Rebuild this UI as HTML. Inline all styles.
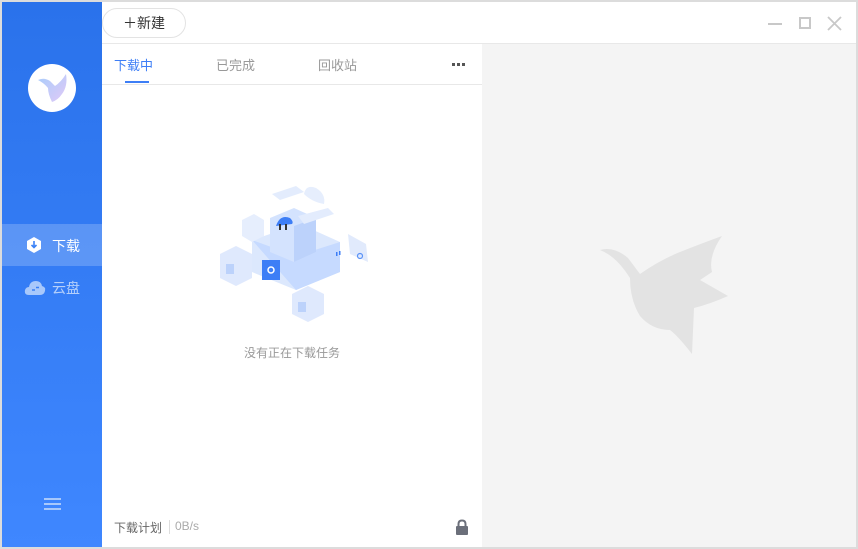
<!DOCTYPE html><html><head><meta charset="utf-8"><style>
*{margin:0;padding:0;box-sizing:border-box}
body{width:858px;height:549px;background:#dcdcdc;font-family:"Liberation Sans","Noto Sans CJK SC",sans-serif;position:relative;overflow:hidden}
.win{position:absolute;left:2px;top:2px;width:854px;height:545px;background:#fff}
.side{position:absolute;left:0;top:0;width:100px;height:545px;background:linear-gradient(#2a72eb,#3f87ff)}
.abs{position:absolute}
</style></head><body><div class="win">
<div class="side">
 <div class="abs" style="left:26px;top:62px;width:48px;height:48px;border-radius:50%;background:#fff;overflow:hidden">
  <svg width="48" height="48" viewBox="0 0 48 48"><defs><linearGradient id="g" x1="0" y1="0" x2="1" y2="1"><stop offset="0" stop-color="#a9cdfb"/><stop offset="1" stop-color="#e0c9f7"/></linearGradient></defs><path d="M10 16 Q16 13 22 17 L27 22 Q33 18 38 10 Q40 22 34 30 Q30 36 24 38 Q20 30 20 24 Q16 19 10 16Z" fill="url(#g)"/></svg>
 </div>
 <div class="abs" style="left:0;top:222px;width:100px;height:42px;background:rgba(255,255,255,.2)"></div>
 <svg class="abs" style="left:23px;top:234px" width="18" height="18" viewBox="0 0 18 18"><path d="M9 1 L16 5 V13 L9 17 L2 13 V5Z" fill="#fff"/><path d="M9 5 V11 M6.5 9 L9 11.5 L11.5 9" stroke="#3b82f6" stroke-width="1.6" fill="none"/></svg>
 <div class="abs" style="left:50px;top:234px;color:#fff;font-size:14px">下载</div>
 <svg class="abs" style="left:22px;top:278px" width="22" height="16" viewBox="0 0 22 16"><path d="M5 15 Q0 15 1 10 Q2 7 5 7 Q6 1 12 1 Q17 1 18 6 Q22 7 21 11 Q20 15 16 15Z" fill="#a8c8fb"/><path d="M8 10 H11 M12 7.5 H15" stroke="#3a80f5" stroke-width="1.5"/></svg>
 <div class="abs" style="left:50px;top:276px;color:#b5d0fb;font-size:14px">云盘</div>
 <div class="abs" style="left:42px;top:496px;width:17px;height:2px;background:#a8c8fb;box-shadow:0 5px 0 #a8c8fb,0 10px 0 #a8c8fb"></div>
</div>
<div class="abs" style="left:100px;top:6px;width:84px;height:30px;border:1px solid #e3e3e3;border-radius:15px;font-size:14px;color:#333;text-align:center;line-height:28px">＋新建</div>
<div class="abs" style="left:100px;top:41px;width:754px;height:1px;background:#e8e8e8"></div>
<div class="abs" style="left:766px;top:21px;width:14px;height:1.5px;background:#c8c8c8"></div>
<div class="abs" style="left:797px;top:15px;width:12px;height:12px;border:2px solid #c8c8c8"></div>
<svg class="abs" style="left:825px;top:14px" width="15" height="15"><path d="M1 1L14 14M14 1L1 14" stroke="#c8c8c8" stroke-width="1.8"/></svg>
<div class="abs" style="left:480px;top:42px;width:374px;height:503px;background:#f4f4f4"></div>
<svg class="abs" style="left:598px;top:232px" width="132" height="124" viewBox="0 0 132 124"><path d="M0 16 Q14 12 28 24 L40 40 Q60 26 80 18 Q100 10 122 2 Q108 22 112 38 L100 46 L128 62 Q110 70 94 74 L92 120 Q78 102 70 96 Q52 96 40 82 Q30 66 30 44 Q16 22 0 16Z" fill="#e3e3e3"/></svg>
<div class="abs" style="left:112px;top:53px;font-size:13px;color:#3d7ef6">下载中</div>
<div class="abs" style="left:123px;top:79px;width:24px;height:2px;background:#3d7ef6"></div>
<div class="abs" style="left:214px;top:53px;font-size:13px;color:#999">已完成</div>
<div class="abs" style="left:316px;top:53px;font-size:13px;color:#999">回收站</div>
<div class="abs" style="left:450px;top:61px;width:3px;height:3px;background:#555;box-shadow:5px 0 0 #555,10px 0 0 #555"></div>
<div class="abs" style="left:100px;top:82px;width:380px;height:1px;background:#e8e8e8"></div>
<svg class="abs" style="left:214px;top:178px" width="156" height="142" viewBox="0 0 156 142">
 <path d="M36 60 L84 44 L124 62 L124 92 L80 110 L36 92Z" fill="#dce8fd"/><path d="M36 60 L80 76 L124 62 L124 92 L80 110Z" fill="#c6daff"/>
 <path d="M54 38 L78 28 L100 38 L100 72 L78 82 L54 72Z" fill="#d4e3fe"/><path d="M78 46 L100 38 L100 72 L78 82Z" fill="#bcd2fb"/>
 <path d="M82 36 L112 28 L118 34 L88 44Z" fill="#e3ecfd"/><path d="M56 14 L80 6 L88 12 L64 20Z" fill="#e3ecfd"/>
 <path d="M60 46 Q64 34 74 38 Q78 42 76 44Z" fill="#3d7ef6"/><rect x="63" y="44" width="2" height="6" fill="#333"/><rect x="69" y="44" width="2" height="6" fill="#333"/>
 <path d="M88 14 Q90 4 100 8 Q110 14 108 24 Q96 22 88 14Z" fill="#e6eefd"/>
 <rect x="46" y="80" width="18" height="20" fill="#3d7ef6"/><circle cx="55" cy="90" r="3" fill="none" stroke="#fff" stroke-width="1.5"/>
 <path d="M4 74 L20 66 L36 74 L36 98 L20 106 L4 98Z" fill="#dfe9fd"/><rect x="10" y="84" width="8" height="10" fill="#bcd2fb"/>
 <path d="M76 114 L92 106 L108 114 L108 134 L92 142 L76 134Z" fill="#dfe9fd"/><rect x="82" y="122" width="8" height="10" fill="#bcd2fb"/>
 <path d="M26 40 L38 34 L48 40 L48 56 L36 62 L26 56Z" fill="#e6eefd"/>
 <path d="M132 54 L150 64 L152 82 L134 74Z" fill="#e1eafc"/><circle cx="144" cy="76" r="2.5" fill="none" stroke="#5a92f7" stroke-width="1.2"/>
 <rect x="120" y="72" width="1.5" height="4" fill="#3d7ef6"/><rect x="123" y="71" width="1.5" height="4" fill="#3d7ef6"/>
</svg>
<div class="abs" style="left:242px;top:342px;font-size:12px;color:#999">没有正在下载任务</div>
<div class="abs" style="left:112px;top:517px;font-size:12px;color:#666">下载计划</div>
<div class="abs" style="left:167px;top:518px;width:1px;height:14px;background:#ddd"></div>
<div class="abs" style="left:173px;top:517px;font-size:12px;color:#aaa">0B/s</div>
<svg class="abs" style="left:453px;top:517px" width="14" height="16" viewBox="0 0 14 16"><path d="M3.5 7 V5 Q3.5 1.5 7 1.5 Q10.5 1.5 10.5 5 V7" stroke="#6b6f7a" stroke-width="2" fill="none"/><rect x="1" y="7" width="12" height="9" rx="1" fill="#6b6f7a"/></svg>
</div></body></html>
